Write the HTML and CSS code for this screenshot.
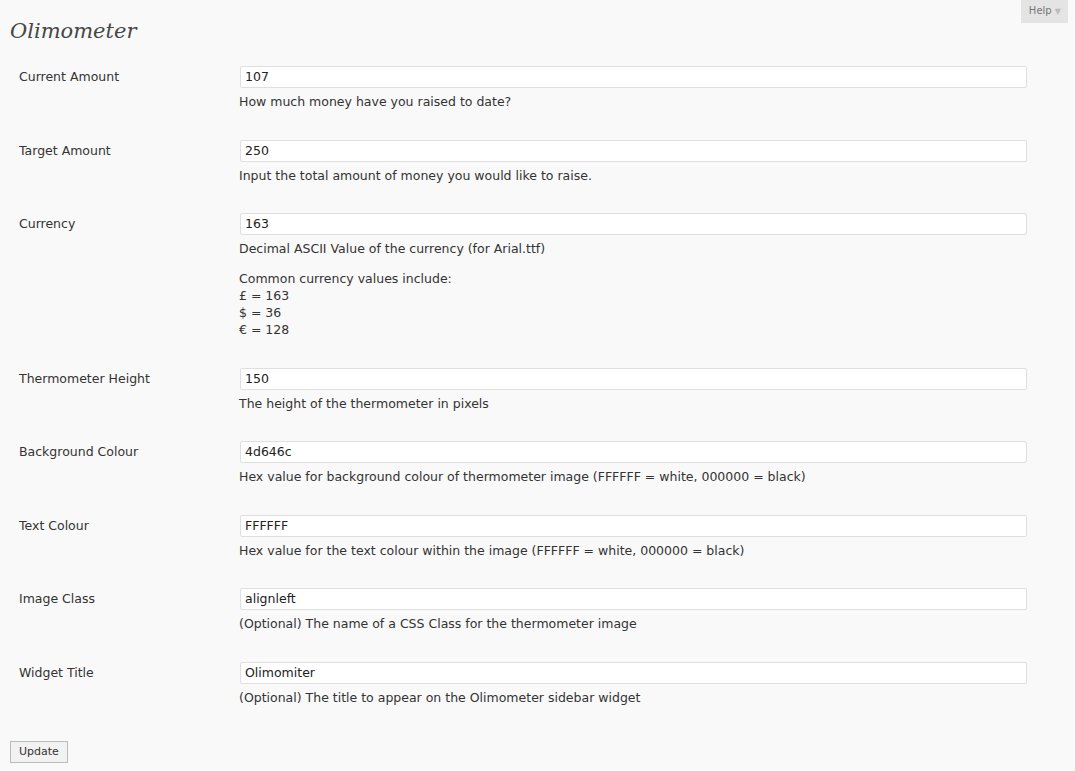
FILE: index.html
```html
<!DOCTYPE html>
<html>
<head>
<meta charset="utf-8">
<link rel="stylesheet" href="styles.css">
</head>
<body>
<div class="help-bar"><span class="help-btn">Help <span class="arrow">▼</span></span></div>
<div class="wrap">
  <h2 class="title">Olimometer</h2>
  <div class="form">
    <div class="row">
      <div class="label">Current Amount</div>
      <div class="field"><div class="input">107</div><p class="desc">How much money have you raised to date?</p></div>
    </div>
    <div class="row">
      <div class="label">Target Amount</div>
      <div class="field"><div class="input">250</div><p class="desc">Input the total amount of money you would like to raise.</p></div>
    </div>
    <div class="row">
      <div class="label">Currency</div>
      <div class="field"><div class="input">163</div><p class="desc">Decimal ASCII Value of the currency (for Arial.ttf)</p>
        <p class="desc extra">Common currency values include:<br>£ = 163<br>$ = 36<br>€ = 128</p></div>
    </div>
    <div class="row">
      <div class="label">Thermometer Height</div>
      <div class="field"><div class="input">150</div><p class="desc">The height of the thermometer in pixels</p></div>
    </div>
    <div class="row">
      <div class="label">Background Colour</div>
      <div class="field"><div class="input">4d646c</div><p class="desc">Hex value for background colour of thermometer image (FFFFFF = white, 000000 = black)</p></div>
    </div>
    <div class="row">
      <div class="label">Text Colour</div>
      <div class="field"><div class="input">FFFFFF</div><p class="desc">Hex value for the text colour within the image (FFFFFF = white, 000000 = black)</p></div>
    </div>
    <div class="row">
      <div class="label">Image Class</div>
      <div class="field"><div class="input">alignleft</div><p class="desc">(Optional) The name of a CSS Class for the thermometer image</p></div>
    </div>
    <div class="row">
      <div class="label">Widget Title</div>
      <div class="field"><div class="input">Olimomiter</div><p class="desc">(Optional) The title to appear on the Olimometer sidebar widget</p></div>
    </div>
  </div>
  <div class="actions"><span class="button">Update</span></div>
</div>
</body>
</html>
```
FILE: styles.css
```css
html, body {
  margin: 0;
  padding: 0;
  background: #f9f9f9;
}
body {
  font-family: "DejaVu Sans", Verdana, sans-serif;
  font-size: 12.5px;
  color: #333;
  width: 1075px;
  height: 771px;
  overflow: hidden;
  position: relative;
}
.help-bar {
  position: absolute;
  top: 0;
  right: 7px;
}
.help-btn {
  display: block;
  background: #e4e4e4;
  color: #777;
  font-size: 10px;
  line-height: 22px;
  padding: 0 7px 0 8px;
}
.help-btn .arrow {
  color: #bbb;
  font-size: 8px;
}
.wrap {
  padding-left: 10px;
}
.title {
  margin: 0;
  padding-top: 16px;
  height: 34px;
  font-family: "DejaVu Serif", Georgia, serif;
  font-style: italic;
  font-weight: normal;
  font-size: 21px;
  line-height: 30px;
  color: #464646;
}
.form {
  padding-top: 6px;
}
.row {
  display: flex;
  padding: 10px 0 17.5px;
}
.row + .row {
  padding-top: 11px;
}
.label {
  width: 221px;
  padding-left: 9px;
  line-height: 22px;
  color: #333;
}
.field {
  flex: 0 0 787px;
}
.input {
  height: 20px;
  line-height: 20px;
  border: 1px solid #dfdfdf;
  border-radius: 2px;
  background: #fff;
  padding-left: 4px;
  color: #222;
}
.desc {
  margin: 4px 0 0 -1px;
  line-height: 19px;
  color: #333;
}
.desc.extra {
  margin-top: 12px;
  margin-bottom: 1px;
  line-height: 17px;
}
.actions {
  padding-top: 17px;
}
.button {
  display: inline-block;
  font-size: 11px;
  line-height: 20px;
  padding: 0 8px;
  border: 1px solid #bbb;
  background: #f2f2f2;
  color: #333;
}
```
